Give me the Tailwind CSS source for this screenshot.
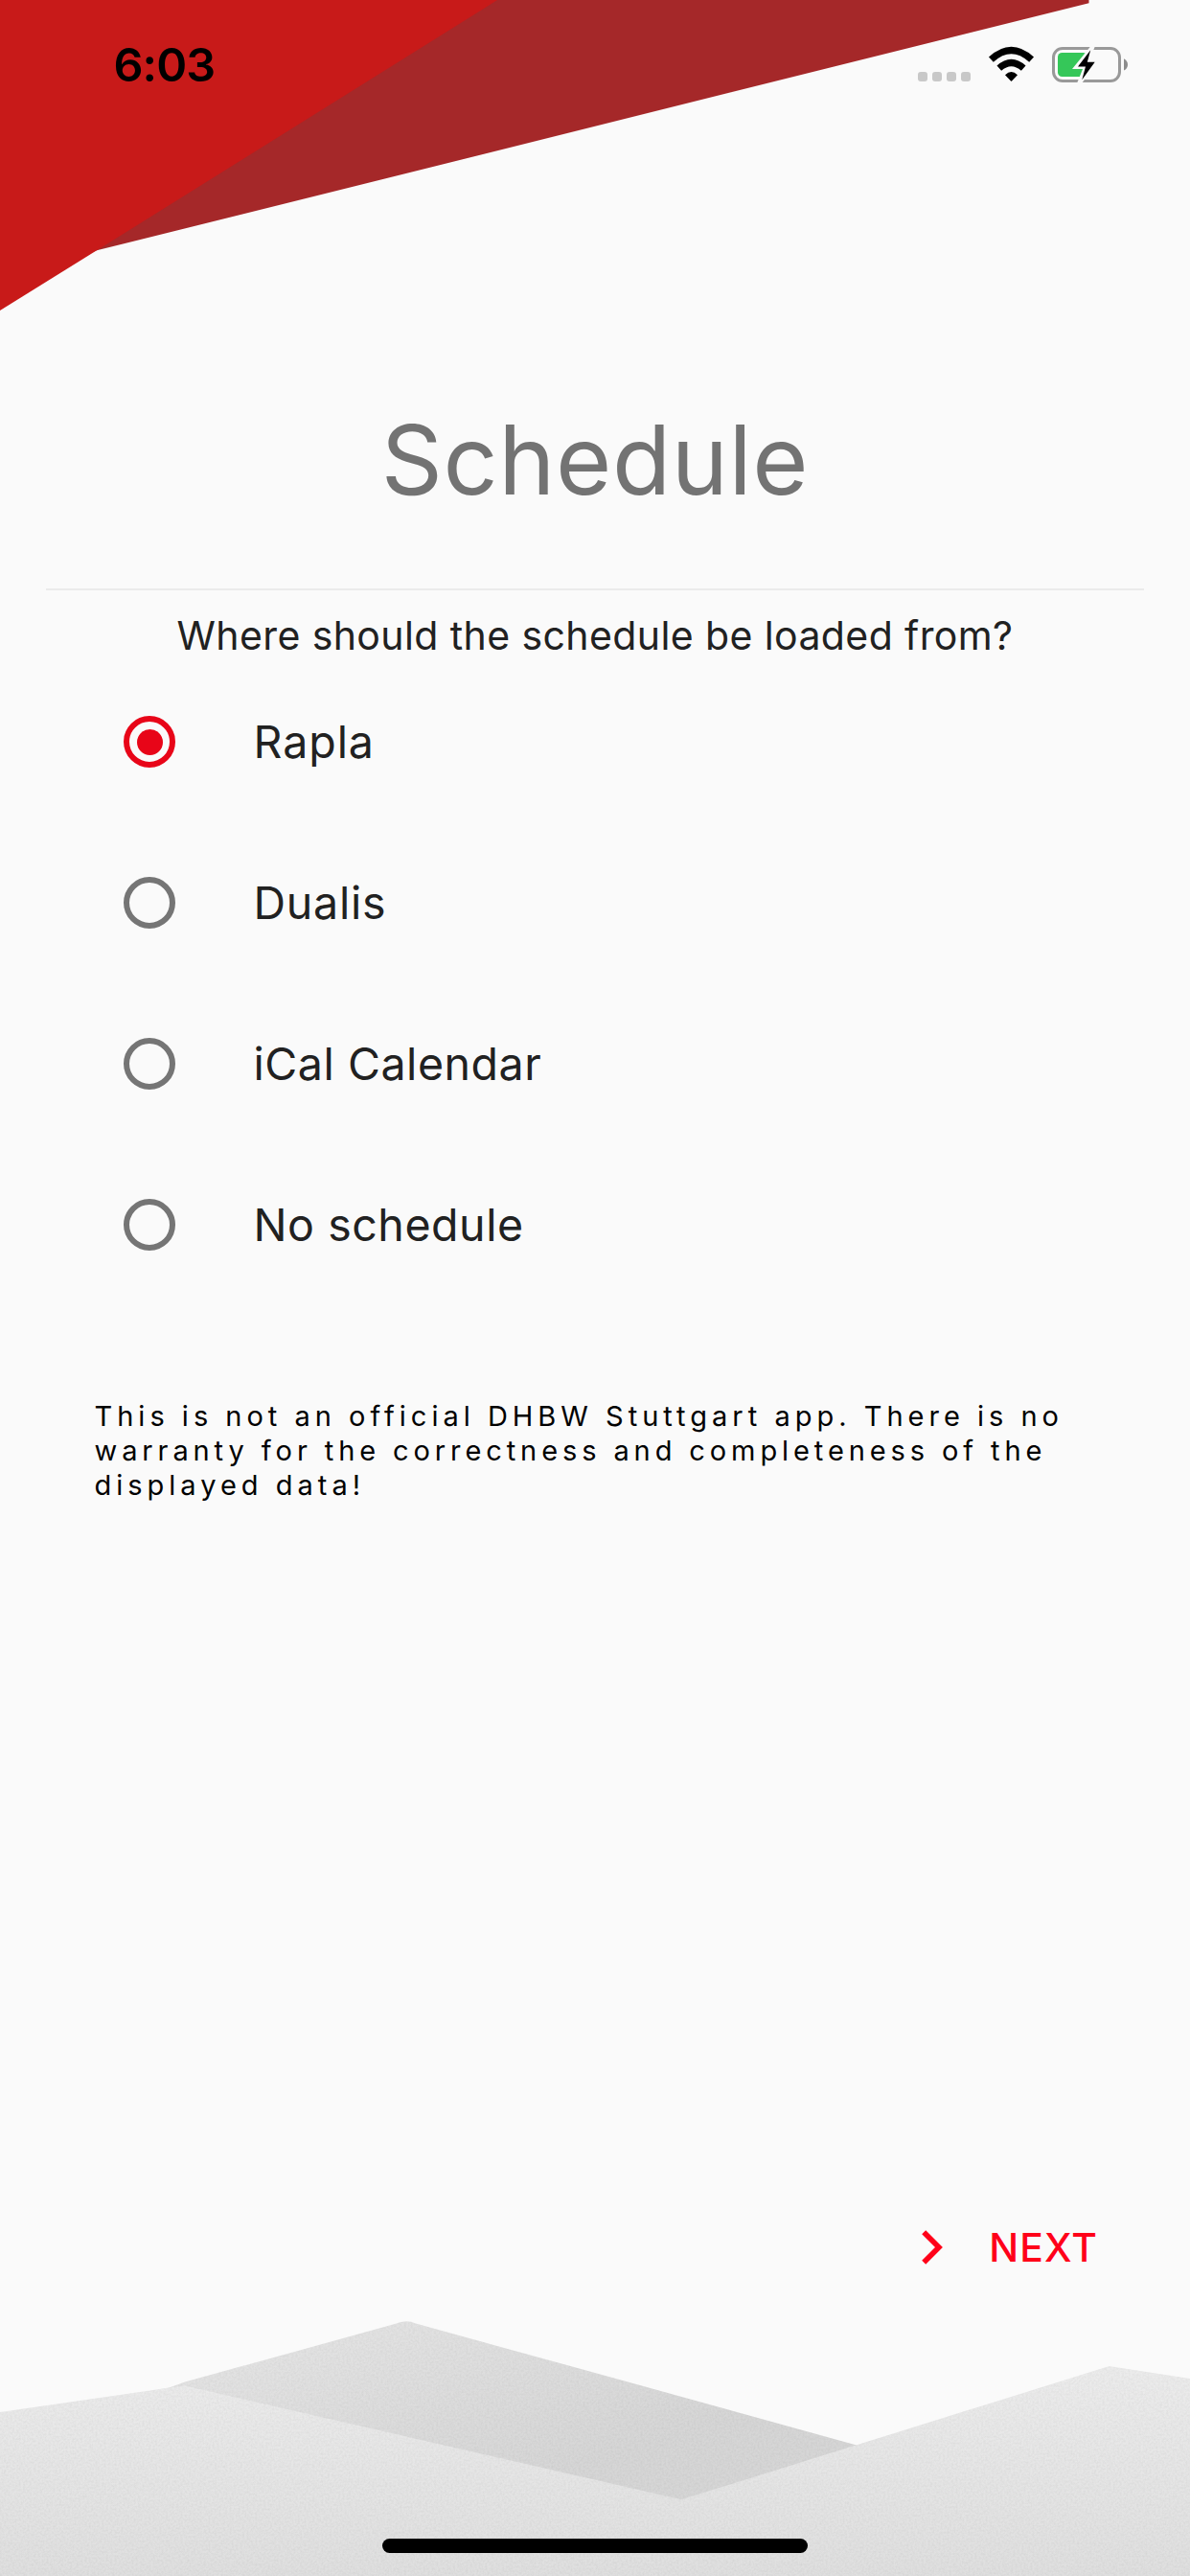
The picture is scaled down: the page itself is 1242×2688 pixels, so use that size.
<!DOCTYPE html>
<html lang="en">
<head>
<meta charset="utf-8">
<title>Schedule</title>
<script src="https://cdn.jsdelivr.net/npm/@tailwindcss/browser@4"></script>
</head>
<body class="bg-[#fafafa] font-['Inter',sans-serif]">
<div class="relative flex h-[2688px] w-[1242px] flex-col overflow-hidden bg-[#fafafa] text-[#212121]">

  <!-- Decorative background shapes -->
  <svg class="absolute left-0 top-0" width="1242" height="330" viewBox="0 0 1242 330" aria-hidden="true">
    <path d="M0 0H1136.5V3.3L101 261.3 0 300Z" fill="#a52829"/>
    <path d="M0 0H519L101 261.3 0 324Z" fill="#c81a19"/>
  </svg>
  <svg class="absolute bottom-0 left-0" width="1242" height="288" viewBox="0 0 1242 288" aria-hidden="true">
    <defs>
      <linearGradient id="back" gradientUnits="userSpaceOnUse" x1="424" y1="22" x2="480" y2="208">
        <stop offset="0" stop-color="#e2e2e2"/><stop offset="1" stop-color="#d6d6d6"/>
      </linearGradient>
      <linearGradient id="front" gradientUnits="userSpaceOnUse" x1="0" y1="69" x2="0" y2="288">
        <stop offset="0" stop-color="#ececec"/><stop offset="1" stop-color="#dfdfdf"/>
      </linearGradient>
      <filter id="grain" x="0" y="0" width="100%" height="100%" color-interpolation-filters="sRGB">
        <feTurbulence type="fractalNoise" baseFrequency="0.45" numOctaves="2" seed="4"/>
        <feColorMatrix type="matrix" values="0 0 0 0 0  0 0 0 0 0  0 0 0 0 0  0.08 0 0 0 -0.026"/>
      </filter>
      <clipPath id="hills">
        <path d="M150 110L175 92 193 85.5 412 25Q424 20 434 24.5L621 76 894 151.5 894 220H600Z"/>
        <path d="M0 117L158 94.3Q176 91 193 89.5L711 208.3 894 151.3 1157.6 69 1242 82V288H0Z"/>
      </clipPath>
    </defs>
    <path d="M150 110L175 92 193 85.5 412 25Q424 20 434 24.5L621 76 894 151.5 894 220H600Z" fill="url(#back)"/>
    <path d="M0 117L158 94.3Q176 91 193 89.5L711 208.3 894 151.3 1157.6 69 1242 82V288H0Z" fill="url(#front)"/>
    <g clip-path="url(#hills)"><rect width="1242" height="288" filter="url(#grain)"/></g>
  </svg>

  <!-- Status bar -->
  <header class="relative flex h-[135px] shrink-0 items-center justify-between pl-[118.5px] pr-[65px]">
    <time class="pt-0.5 text-[48.5px] font-semibold leading-none tracking-[-0.9px] text-black">6:03</time>
    <svg width="220" height="39" viewBox="957 48 220 39" aria-hidden="true">
      <g fill="#c8c8c8">
        <rect x="958" y="75" width="10" height="10" rx="3"/><rect x="973" y="75" width="10" height="10" rx="3"/><rect x="988" y="75" width="10" height="10" rx="3"/><rect x="1003" y="75" width="10" height="10" rx="3"/>
      </g>
      <g>
        <path d="M1034.4 62.2Q1055.5 43 1076.6 62.2" fill="none" stroke="#000" stroke-width="7.2"/>
        <path d="M1042.8 71.2Q1055.5 59.8 1068.2 71.2" fill="none" stroke="#000" stroke-width="7"/>
        <path d="M1049 78.2Q1055.5 71.6 1062 78.2L1056 84.6Q1055.5 85 1055 84.6Z"/>
      </g>
      <rect x="1099.5" y="50.5" width="69" height="34" rx="9.5" fill="none" stroke="#999" stroke-width="3"/>
      <path d="M1173 61.3Q1177 63.5 1177 67.4T1173 73.6Z" fill="#8c8c8c"/>
      <rect x="1104" y="55" width="31" height="25" rx="4.5" fill="#35c759"/>
      <path d="M1138.5 48L1119 72H1130L1124 87H1129L1145 65H1136L1143 48Z" fill="#fafafa"/>
      <path d="M1138.2 52.3L1125 69.4H1133L1129.3 83.3 1142.7 64.8H1134.8Z"/>
    </svg>
  </header>

  <main class="relative flex grow flex-col">
    <h1 class="mt-[285px] text-center text-[100px] font-normal leading-[120px] tracking-[0.6px] text-[#737373]">Schedule</h1>
    <hr class="mx-12 mt-[74px] h-0.5 border-0 bg-[#ebebeb]">
    <p class="mt-[23px] text-center text-[41px] leading-[48px] tracking-[0.4px]">Where should the schedule be loaded from?</p>

    <div class="mt-[3px] flex flex-col pl-[129px] text-[46.5px] leading-none" role="radiogroup">
      <div class="flex h-[168px] items-center gap-[81.5px]" role="radio" aria-checked="true">
        <span class="flex size-[54px] items-center justify-center rounded-full border-6 border-[#e80518]"><span class="size-[27px] rounded-full bg-[#e80518]"></span></span>
        <span class="tracking-[0.95px]">Rapla</span>
      </div>
      <div class="flex h-[168px] items-center gap-[81.5px]" role="radio" aria-checked="false">
        <span class="size-[54px] rounded-full border-6 border-[#757575]"></span>
        <span class="tracking-[0.78px]">Dualis</span>
      </div>
      <div class="flex h-[168px] items-center gap-[81.5px]" role="radio" aria-checked="false">
        <span class="size-[54px] rounded-full border-6 border-[#757575]"></span>
        <span class="tracking-[0.55px]">iCal Calendar</span>
      </div>
      <div class="flex h-[168px] items-center gap-[81.5px]" role="radio" aria-checked="false">
        <span class="size-[54px] rounded-full border-6 border-[#757575]"></span>
        <span class="tracking-[0.55px]">No schedule</span>
      </div>
    </div>

    <p class="mt-[98px] pl-[98.5px] text-[29px] leading-9 tracking-[5px] text-black">This is not an official DHBW Stuttgart app. There is no<br><span class="tracking-[4.9px]">warranty for the correctness and completeness of the</span><br>displayed data!</p>

    <div class="mb-[319px] mt-auto flex items-center justify-end gap-[48px] pr-[96px] text-[#ff0019]">
      <svg width="22" height="36" viewBox="0 0 22 36" fill="currentColor" aria-hidden="true"><path d="M4.2 0.2L21.9 18 4.2 35.8 0.2 31.8 14 18 0.2 4.2Z"/></svg>
      <span class="text-[40.8px] font-medium leading-12 tracking-[1.2px]">NEXT</span>
    </div>
  </main>

  <!-- Home indicator -->
  <div class="absolute bottom-6 left-[399px] h-[15px] w-[444px] rounded-full bg-black"></div>
</div>
</body>
</html>
